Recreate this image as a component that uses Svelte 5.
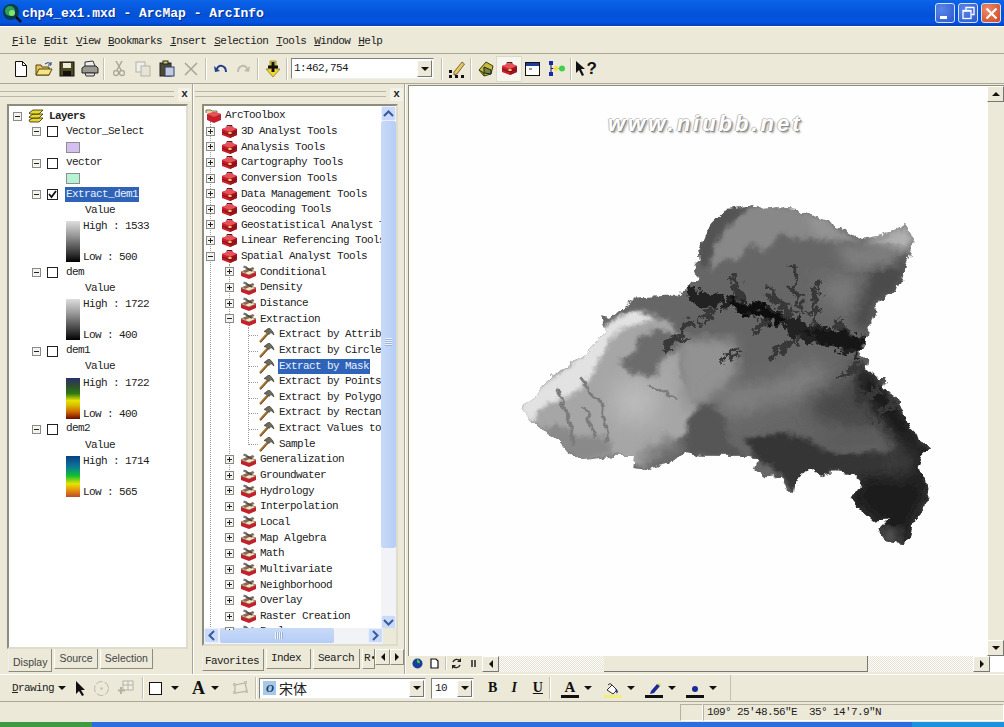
<script>
  const menus = ['File','Edit','View','Bookmarks','Insert','Selection','Tools','Window','Help'];
  const layers = [
    { name:'Vector_Select', swatch:'lilac' },
    { name:'vector', swatch:'mint' },
    { name:'Extract_dem1', checked:true, selected:true, high:'1533', low:'500', ramp:'gray-a' },
    { name:'dem', high:'1722', low:'400', ramp:'gray-b' },
    { name:'dem1', high:'1722', low:'400', ramp:'elev-a' },
    { name:'dem2', high:'1714', low:'565', ramp:'elev-b' }
  ];
  const tree = [
    ['3D Analyst Tools',1,'+'],['Analysis Tools',1,'+'],['Cartography Tools',1,'+'],['Conversion Tools',1,'+'],
    ['Data Management Tools',1,'+'],['Geocoding Tools',1,'+'],['Geostatistical Analyst Tools',1,'+'],
    ['Linear Referencing Tools',1,'+'],['Spatial Analyst Tools',1,'-'],
    ['Conditional',2,'+'],['Density',2,'+'],['Distance',2,'+'],['Extraction',2,'-'],
    ['Extract by Attributes',3],['Extract by Circle',3],['Extract by Mask',3,null,true],['Extract by Points',3],
    ['Extract by Polygon',3],['Extract by Rectangle',3],['Extract Values to Points',3],['Sample',3],
    ['Generalization',2,'+'],['Groundwater',2,'+'],['Hydrology',2,'+'],['Interpolation',2,'+'],['Local',2,'+'],
    ['Map Algebra',2,'+'],['Math',2,'+'],['Multivariate',2,'+'],['Neighborhood',2,'+'],['Overlay',2,'+'],
    ['Raster Creation',2,'+'],['Reclass',2,'+']
  ];
  const outline = "760,45 790,60 830,55 890,60 930,75 970,95 1020,115 1080,150 1140,140 1185,125 1215,105 1240,140 1235,180 1220,225 1195,300 1140,335 1120,380 1105,430 1100,460 1075,490 1105,510 1100,540 1130,570 1160,570 1150,600 1190,620 1210,670 1215,700 1240,725 1255,750 1290,775 1265,800 1255,840 1280,860 1285,900 1275,960 1240,1000 1230,1040 1205,1065 1150,1055 1135,1020 1165,990 1120,995 1080,960 1055,930 1085,880 1060,855 1000,850 960,860 925,835 890,870 885,905 865,905 840,860 800,865 765,840 775,810 740,800 660,800 600,800 560,790 510,820 430,840 400,835 405,800 340,800 300,810 250,815 205,795 170,755 130,720 90,700 60,655 110,620 130,590 180,545 230,510 270,480 320,430 300,385 330,390 375,350 420,325 500,320 540,320 570,280 595,270 580,235 600,210 595,180 615,130 640,100 680,60 720,55";
</script>

{#snippet exp(sign)}
  <svg class="exp" width="9" height="9" viewBox="0 0 9 9"><rect x=".5" y=".5" width="8" height="8" fill="#f4f3ee" stroke="#8a8a8a"/><path d="M2 4.5h5" stroke="#222"/>{#if sign==='+'}<path d="M4.5 2v5" stroke="#222"/>{/if}</svg>
{/snippet}
{#snippet boxClosed()}
  <svg width="17" height="15" viewBox="0 0 17 15"><path d="M1 5l8-3 7 3v6l-7 3-8-3z" fill="#c41f2b"/><path d="M1 5l8-3 7 3-7 3z" fill="#e8505a"/><path d="M9 8v6l7-3V5z" fill="#9c1420"/><path d="M6 3V1.500h5V3" fill="none" stroke="#5a1a1a"/><path d="M1 8l8 3 7-3" fill="none" stroke="#7a1018"/><rect x="7.500" y="8" width="3" height="2" fill="#f2d060"/></svg>
{/snippet}
{#snippet boxOpen()}
  <svg width="17" height="16" viewBox="0 0 17 16"><path d="M1 8l8 3 7-3v4l-7 3-8-3z" fill="#c41f2b"/><path d="M1 8l7-3 8 3-7 3z" fill="#f2e4cf" stroke="#7a4a2a" stroke-width=".7"/><path d="M3 7L13 3l1.500 2L5 9z" fill="#8a6a4a"/><path d="M5 3l7 4" stroke="#4a4a4a" stroke-width="2"/><path d="M4 1.500l3 1-1 2-3-1z" fill="#777"/></svg>
{/snippet}
{#snippet hammer()}
  <svg width="17" height="16" viewBox="0 0 17 16"><path d="M2 15L10 6" stroke="#a87c3a" stroke-width="2.600"/><path d="M2.500 15.500L10.500 6.500" stroke="#5a3a12" stroke-width=".8"/><path d="M6 4.500L10 1.500h2L15 5l1 3-3-2.500-2 2-2-2z" fill="#6d6a5e" stroke="#2e2e28" stroke-width=".6"/></svg>
{/snippet}
{#snippet drop()}<i class="drop"></i>{/snippet}
{#snippet comboBtn()}<span class="combo-btn"><i class="drop"></i></span>{/snippet}

<div class="app">
  <header class="title">
    <svg class="logo" width="20" height="20" viewBox="0 0 20 20"><circle cx="9" cy="9" r="8" fill="#0b3c4c"/><circle cx="8" cy="8" r="5" fill="#2aa05a"/><circle cx="10" cy="10" r="3" fill="#8ae070"/><path d="M14 14l5 5" stroke="#111" stroke-width="2.500"/></svg>
    <span class="title-text">chp4_ex1.mxd - ArcMap - ArcInfo</span>
    <div class="winbtns">
      <span class="wb"><svg width="19" height="19" viewBox="0 0 19 19"><rect x="4" y="12" width="7" height="3" fill="#fff"/></svg></span>
      <span class="wb"><svg width="19" height="19" viewBox="0 0 19 19"><path d="M7 6V3.500h8v7h-2.500" fill="none" stroke="#fff" stroke-width="1.300"/><rect x="4" y="6.500" width="8" height="8" fill="none" stroke="#fff" stroke-width="1.300"/><path d="M4 7h8" stroke="#fff" stroke-width="1.500"/></svg></span>
      <span class="wb close"><svg width="19" height="19" viewBox="0 0 19 19"><path d="M4.500 4.500l10 10M14.500 4.500l-10 10" stroke="#fff" stroke-width="2.200"/></svg></span>
    </div>
  </header>

  <nav class="menu">
    {#each menus as m}<span><u>{m[0]}</u>{m.slice(1)}</span>{/each}
  </nav>

  <div class="bar std">
    <span class="btn"><svg width="16" height="18" viewBox="0 0 16 18"><path d="M2.500 1.500h7l4 4v11h-11z" fill="#fff" stroke="#111"/><path d="M9.500 1.500v4h4" fill="none" stroke="#111"/></svg></span>
    <span class="btn"><svg width="18" height="16" viewBox="0 0 18 16"><path d="M1 14V4h5l1 2h7v8z" fill="#e6c65a" stroke="#55440f"/><path d="M1 14l3-6h13l-3 6z" fill="#f6e48a" stroke="#55440f"/><path d="M10 3q3-3 6 0M16 1v3h-3" fill="none" stroke="#1d3e7a"/></svg></span>
    <span class="btn"><svg width="16" height="16" viewBox="0 0 16 16"><rect x="1" y="1" width="14" height="14" fill="#4c4a1e" stroke="#111"/><rect x="4" y="2" width="8" height="5" fill="#ecebd8"/><rect x="4" y="10" width="8" height="5" fill="#111"/></svg></span>
    <span class="btn"><svg width="18" height="17" viewBox="0 0 18 17"><path d="M4 7V2l8-1 2 5" fill="#eee" stroke="#333"/><path d="M1 8l3-2h11l2 2v5H1z" fill="#9a9a92" stroke="#222"/><path d="M4 13h10l-1 3H5z" fill="#ddd" stroke="#333"/></svg></span>
    <i class="sep"></i>
    <span class="btn w24 off"><svg width="12" height="17" viewBox="0 0 12 17"><path d="M3 1l5 9M9 1L4 10" stroke="#a9a797" stroke-width="1.500"/><circle cx="3" cy="13" r="2.500" fill="none" stroke="#a9a797" stroke-width="1.300"/><circle cx="9" cy="13" r="2.500" fill="none" stroke="#a9a797" stroke-width="1.300"/></svg></span>
    <span class="btn w24 off"><svg width="16" height="16" viewBox="0 0 16 16"><rect x="1" y="1" width="9" height="10" fill="#eee" stroke="#b5b3a4"/><rect x="6" y="5" width="9" height="10" fill="#e6e4d6" stroke="#b5b3a4"/></svg></span>
    <span class="btn w24"><svg width="16" height="17" viewBox="0 0 16 17"><rect x="1" y="3" width="11" height="13" fill="#4c4a32" stroke="#222"/><rect x="4" y="1" width="5" height="3" fill="#d8c068" stroke="#222"/><rect x="6" y="7" width="9" height="9" fill="#c4c9dd" stroke="#2a3f75"/></svg></span>
    <span class="btn w24 off"><svg width="14" height="14" viewBox="0 0 14 14"><path d="M1 1l12 12M13 1L1 13" stroke="#a9a797" stroke-width="1.600"/></svg></span>
    <i class="sep"></i>
    <span class="btn"><svg width="15" height="11" viewBox="0 0 15 11"><path d="M3 8Q5 2 9 3q4 1 4 6" fill="none" stroke="#27408b" stroke-width="2"/><path d="M1 3l1 6 5-1z" fill="#27408b"/></svg></span>
    <span class="btn"><svg width="15" height="11" viewBox="0 0 15 11"><path d="M12 8Q10 2 6 3 2 4 2 9" fill="none" stroke="#bdbbad" stroke-width="2"/><path d="M14 3l-1 6-5-1z" fill="#bdbbad"/></svg></span>
    <i class="sep"></i>
    <span class="btn"><svg width="16" height="18" viewBox="0 0 16 18"><path d="M1 9l7 8 7-8h-4V1H5v8z" fill="#f2d830" stroke="#6a5a10" stroke-width=".6"/><path d="M6.500 2h3v3.500H13v3H9.500V12h-3V8.500H3v-3h3.500z" fill="#111"/></svg></span>
    <i class="sep"></i>
    <div class="combo scale"><span>1:462,754</span>{@render comboBtn()}</div>
    <i class="sep gapl"></i>
    <span class="btn"><svg width="18" height="18" viewBox="0 0 18 18"><path d="M6 12L14 2l2.500 2L9 14l-3 1z" fill="#e8c860" stroke="#4a3a10" stroke-width=".7"/><g fill="#111"><rect x="1" y="10" width="3" height="3"/><rect x="1" y="15" width="3" height="3"/><rect x="7" y="15" width="3" height="3"/><rect x="13" y="15" width="3" height="3"/></g></svg></span>
    <i class="sep"></i>
    <span class="btn"><svg width="18" height="17" viewBox="0 0 18 17"><path d="M2 10L9 2l7 4-2 8-7 2z" fill="#c8ba3c" stroke="#3a3a10"/><path d="M7 7l7 3v4l-7-1z" fill="#6d8a40" stroke="#222"/><path d="M2 10l5 3v3" fill="#8a7a20" stroke="#3a3a10"/></svg></span>
    <span class="btn w24 on">{@render boxClosed()}</span>
    <span class="btn"><svg width="15" height="14" viewBox="0 0 15 14"><rect x=".5" y=".5" width="14" height="13" fill="#fff" stroke="#111"/><rect x="1" y="1" width="13" height="3" fill="#1d3e9a"/><path d="M4 7h3" stroke="#333"/></svg></span>
    <span class="btn w24"><svg width="17" height="15" viewBox="0 0 17 15"><path d="M3 2v11M3 7.500h10" stroke="#1a1a60"/><rect x="1" y="0" width="4" height="4" fill="#1428b0"/><rect x="1" y="11" width="4" height="4" fill="#1428b0"/><path d="M5 7.500l3-3 3 3-3 3z" fill="#f0e040"/><circle cx="14" cy="7.500" r="3" fill="#40d050"/></svg></span>
    <i class="sep"></i>
    <span class="btn"><svg width="12" height="17" viewBox="0 0 12 17"><path d="M1 1l9 8H6l3 6-2 1-3-6-3 3z" fill="#111"/></svg><b class="q">?</b></span>
  </div>

  <main class="main">
    <aside class="panel toc">
      <div class="grip"><i class="lines"></i><b class="x">x</b></div>
      <div class="well">
        <div class="row root"><span class="r-exp">{@render exp('-')}</span>
          <svg class="stack" width="16" height="14" viewBox="0 0 16 14"><g fill="#e8d832" stroke="#2c2a08" stroke-width=".8"><path d="M1 11l4-2h10l-4 4H2z"/><path d="M1 8l4-3h10l-4 4H2z"/><path d="M1 4l4-3h10l-4 4H2z"/></g></svg>
          <b>Layers</b></div>
        {#each layers as l}
          <div class="row layer"><span class="c-exp">{@render exp('-')}</span>
            <span class="check">{#if l.checked}<svg width="9" height="9" viewBox="0 0 9 9"><path d="M1 4l2.500 3L8 1" fill="none" stroke="#111" stroke-width="1.800"/></svg>{/if}</span>
            <span class="lname" class:sel={l.selected}>{l.name}</span></div>
          {#if l.swatch}
            <div class="row swrow"><i class="swatch {l.swatch}"></i></div>
          {:else}
            <div class="row value">Value</div>
            <div class="legend"><i class="ramp {l.ramp}"></i>
              <div class="lab"><span>High : {l.high}</span><span>Low : {l.low}</span></div></div>
          {/if}
        {/each}
      </div>
      <div class="tabs"><span class="tab active">Display</span><span class="tab">Source</span><span class="tab">Selection</span></div>
    </aside>

    <aside class="panel tbx">
      <div class="grip"><i class="lines"></i><b class="x">x</b></div>
      <div class="well tree-well">
        <div class="tree">
          <i class="guide g1"></i><i class="guide g2"></i><i class="guide g3"></i>
          <div class="row node"><svg class="rooticon" width="18" height="15" viewBox="0 0 18 15"><path d="M1 5V2h5l1 1h5v3" fill="#e8d48a" stroke="#776"/><path d="M2 6l7-2 7 2v6l-7 3-7-3z" fill="#c41f2b"/><path d="M2 6l7-2 7 2-7 3z" fill="#e8505a"/></svg><span>ArcToolbox</span></div>
          {#each tree as [name, lvl, sign, sel]}
            <div class="row node l{lvl}">
              {#if sign}<span class="n-exp">{@render exp(sign)}</span>{/if}
              <span class="n-ico">
                {#if lvl===1}{@render boxClosed()}{:else if lvl===2}{@render boxOpen()}{:else}<i class="stub"></i>{@render hammer()}{/if}
              </span>
              <span class="n-text" class:sel={sel}>{name}</span>
            </div>
          {/each}
        </div>
        <div class="vs">
          <span class="sb"><svg width="11" height="7" viewBox="0 0 11 7"><path d="M1 6l4.500-4.500L10 6" fill="none" stroke="#3a5a9a" stroke-width="2"/></svg></span>
          <div class="vthumb"><i class="knurl"></i></div>
          <div class="vrest"></div>
          <span class="sb"><svg width="11" height="7" viewBox="0 0 11 7"><path d="M1 1l4.500 4.500L10 1" fill="none" stroke="#3a5a9a" stroke-width="2"/></svg></span>
        </div>
        <div class="hs">
          <span class="sb"><svg width="7" height="11" viewBox="0 0 7 11"><path d="M6 1L1.500 5.500 6 10" fill="none" stroke="#3a5a9a" stroke-width="2"/></svg></span>
          <div class="hthumb"><i class="knurl h"></i></div>
          <div class="hrest"></div>
          <span class="sb"><svg width="7" height="11" viewBox="0 0 7 11"><path d="M1 1l4.500 4.500L1 10" fill="none" stroke="#3a5a9a" stroke-width="2"/></svg></span>
          <i class="corner"></i>
        </div>
      </div>
      <div class="tabs ttabs"><span class="tab active">Favorites</span><span class="tab ix">Index</span><span class="tab">Search</span><span class="tab cut">R&#8226;</span>
        <span class="tarrow"><i class="tri-l"></i></span><span class="tarrow"><i class="tri-r"></i></span></div>
    </aside>

    <section class="map">
      <div class="mapview">
        <div class="canvas">
          <svg class="terrain" width="450" height="360" viewBox="0 0 1350 1080">
            <defs>
              <clipPath id="shape"><polygon points={outline}/></clipPath>
              <filter id="jag" x="-5%" y="-5%" width="110%" height="110%"><feTurbulence type="fractalNoise" baseFrequency=".035" numOctaves="3" seed="4"/><feDisplacementMap in="SourceGraphic" scale="26" xChannelSelector="R" yChannelSelector="G"/></filter>
              <filter id="jag2" x="-5%" y="-5%" width="110%" height="110%"><feTurbulence type="fractalNoise" baseFrequency=".045" numOctaves="4" seed="11"/><feDisplacementMap in="SourceGraphic" scale="55" xChannelSelector="G" yChannelSelector="R"/></filter>
              <filter id="b6"><feGaussianBlur stdDeviation="6"/></filter>
              <filter id="b16"><feGaussianBlur stdDeviation="16"/></filter>
              <filter id="b30" x="-40%" y="-40%" width="180%" height="180%"><feGaussianBlur stdDeviation="30"/></filter>
            </defs>
            <g filter="url(#jag)"><g clip-path="url(#shape)">
              <rect width="1350" height="1080" fill="#666"/>
              <!-- north slope -->
              <polygon filter="url(#b6)" fill="#888" points="625,250 650,150 700,100 760,50 890,55 960,95 1080,160 1000,155 900,150 840,130 800,190 750,160 720,210 670,210"/>
              <polygon filter="url(#b16)" fill="#b4b4b4" points="1080,150 1185,125 1215,95 1250,140 1220,190 1130,170"/>
              <polygon filter="url(#b16)" fill="#9a9a9a" points="920,70 1000,110 1080,155 990,140 930,110"/>
              <polygon filter="url(#b6)" fill="#535353" points="590,210 610,120 680,55 740,50 680,110 640,170 625,245"/>
              <polygon filter="url(#b30)" fill="#808080" points="960,270 1060,270 1070,340 990,350"/>
              <polygon filter="url(#b16)" fill="#4c4c4c" points="1120,230 1230,215 1195,310 1130,340 1105,440 1060,400 1080,340"/>
              <polygon filter="url(#b16)" fill="#7e7e7e" points="1000,170 1200,170 1170,230 1050,240"/>
              <!-- west light slope -->
              <polygon filter="url(#b6)" fill="#a6a6a6" points="60,655 130,590 180,545 270,480 320,430 340,400 440,370 510,400 540,450 545,560 590,660 550,740 430,835 350,795 250,815 170,750 90,700"/>
              <polygon filter="url(#b16)" fill="#929292" points="530,450 700,450 715,540 680,590 610,650 550,660"/>
              <polygon filter="url(#b30)" fill="#848484" points="670,600 770,590 860,565 950,520 1000,590 920,620 800,640 720,680 640,650"/>
              <polygon filter="url(#b30)" fill="#bababa" points="340,580 470,580 460,700 350,700"/>
              <polygon filter="url(#b6)" fill="#e2e2e2" points="50,655 130,590 230,510 300,420 340,395 400,360 460,390 345,430 300,510 270,570 215,620 130,650 90,705"/>
              <polygon filter="url(#b6)" fill="#6c6c6c" points="350,520 400,500 420,440 480,420 530,440 545,470 480,520 470,560 400,555 385,540"/>
              <polygon filter="url(#b6)" fill="#8a8a8a" points="130,720 175,700 230,740 320,740 340,790 250,815 190,790"/>
              <g fill="none" stroke="#7c7c7c" stroke-width="8">
                <polyline points="170,600 205,690 225,770"/><polyline points="240,570 305,650 325,760"/><polyline points="250,650 285,745"/><polyline points="450,590 535,630"/>
              </g>
              <polygon filter="url(#b6)" fill="#565656" points="575,670 630,645 670,680 685,760 745,805 560,795 565,700"/>
              <polygon filter="url(#b16)" fill="#7a7a7a" points="420,800 510,740 540,780 430,840"/>
              <!-- south east -->
              <polygon filter="url(#b30)" fill="#484848" points="920,620 1010,590 1075,560 1140,680 1190,760 1040,720 950,700"/>
              <polygon filter="url(#b6)" fill="#353535" points="735,750 850,730 920,750 1000,790 1180,790 1290,775 1285,1070 1060,1070 1050,930 1085,880 1000,850 890,905 840,860 770,810"/>
              <polygon filter="url(#b16)" fill="#5c5c5c" points="920,740 1030,730 1170,710 1180,760 1010,790"/>
              <polygon filter="url(#b16)" fill="#1c1c1c" points="1070,510 1160,590 1290,780 1280,900 1240,1000 1205,1070 1140,1000 1055,940 1085,870 1180,860 1190,760 1130,680 1070,610"/>
              <polygon filter="url(#b30)" fill="#4a4a4a" points="1170,770 1240,790 1240,860 1170,850"/>
              <polygon filter="url(#b16)" fill="#5a5a5a" points="1140,1015 1190,1015 1205,1060 1150,1060"/>
              <polygon filter="url(#b16)" fill="#686868" points="770,830 815,825 810,865 770,860"/>
              <!-- river network -->
              <g filter="url(#jag2)">
                <g fill="none" stroke="#383838" stroke-width="20" stroke-linecap="round">
                  <polyline points="700,270 715,310 730,345"/><polyline points="800,295 830,330 870,380"/><polyline points="880,235 885,300 905,360"/><polyline points="950,285 940,340 945,400"/><polyline points="610,400 630,375 655,350"/>
                  <polyline points="820,505 860,470 905,445"/><polyline points="500,470 545,440 570,395"/><polyline points="670,510 710,480"/><polyline points="1030,560 1080,530"/><polyline points="1090,630 1130,600"/><polyline points="1130,690 1180,650"/><polyline points="770,420 800,395"/><polyline points="1020,400 1040,440"/>
                </g>
                <polygon fill="#222" points="560,285 605,310 680,325 760,340 860,375 925,405 1000,420 1100,440 1075,510 1000,475 900,455 850,410 780,390 700,365 620,355 560,340"/>
                <polygon fill="#0f0f0f" points="690,335 780,350 850,385 850,405 780,385 700,362"/>
                <polygon fill="#151515" points="900,430 1000,430 1090,450 1075,490 1000,470"/>
              </g>
            </g></g>
          </svg>
          <span class="mark">www.niubb.net</span>
        </div>
        <div class="mvs">
          <span class="xb"><i class="tri-u"></i></span>
          <div class="mv-track"></div>
          <span class="xb"><i class="tri-d"></i></span>
        </div>
      </div>
      <div class="mapfoot">
        <span class="mf"><svg width="11" height="11" viewBox="0 0 11 11"><circle cx="5.500" cy="5.500" r="5" fill="#1a3f9a"/><path d="M5 1q3 1 3 4-2 1-3-1z" fill="#50c050"/></svg></span>
        <span class="mf"><svg width="9" height="11" viewBox="0 0 9 11"><path d="M1 1h5l2 2v7H1z" fill="#fff" stroke="#111" stroke-width="1.200"/></svg></span>
        <i class="sep"></i>
        <span class="mf"><svg width="11" height="11" viewBox="0 0 11 11"><path d="M2 4a4 4 0 0 1 7-1M9 7a4 4 0 0 1-7 1" fill="none" stroke="#222" stroke-width="1.400"/><path d="M10 0v4H6zM1 11V7h4z" fill="#222"/></svg></span>
        <span class="mf"><i class="pause"></i></span>
        <span class="xb left"><i class="tri-l"></i></span>
        <div class="dither a"></div>
        <div class="mhthumb"></div>
        <div class="dither b"></div>
        <span class="xb"><i class="tri-r"></i></span>
        <i class="whitecorner"></i>
      </div>
    </section>
  </main>

  <div class="bar draw">
    <span class="dlabel"><u>D</u>rawing</span>{@render drop()}
    <span class="b18 m1"><svg width="11" height="16" viewBox="0 0 11 16"><path d="M1 1l9 9H6l3 5-2 1-3-5-3 3z" fill="#111"/></svg></span>
    <span class="b18"><svg width="17" height="17" viewBox="0 0 17 17"><circle cx="8.500" cy="8.500" r="7" fill="none" stroke="#b9b7a8" stroke-dasharray="7 2"/><rect x="7.500" y="7.500" width="2" height="2" fill="#b9b7a8"/></svg></span>
    <span class="b18 m2"><svg width="17" height="16" viewBox="0 0 17 16"><rect x="6" y="1" width="10" height="9" fill="#efeee2" stroke="#b5b3a4"/><path d="M11 1v9M6 5h10" stroke="#b5b3a4"/><path d="M4 7v7M1 10.500h7" stroke="#b5b3a4" stroke-width="2"/></svg></span>
    <i class="sep"></i>
    <span class="sq"></span>{@render drop()}
    <b class="bigA">A</b>{@render drop()}
    <span class="b18 m3"><svg width="17" height="14" viewBox="0 0 17 14"><path d="M3 4l10-2 2 8-12 2z" fill="none" stroke="#b5b3a4" stroke-width="1.200"/><g fill="#c5c3b4"><rect x="1" y="2" width="3" height="3"/><rect x="12" y="0" width="3" height="3"/><rect x="13" y="9" width="3" height="3"/><rect x="1" y="10" width="3" height="3"/></g></svg></span>
    <i class="sep"></i>
    <div class="combo font"><svg width="13" height="14" viewBox="0 0 13 14"><rect width="13" height="14" fill="#a8c8e8"/><text x="3" y="11" font-size="11" font-style="italic" font-weight="700" font-family="Liberation Serif" fill="#0c3c6c">O</text></svg><span class="cjk">宋体</span>{@render comboBtn()}</div>
    <div class="combo size"><span>10</span>{@render comboBtn()}</div>
    <b class="fmt bb">B</b><b class="fmt ii">I</b><b class="fmt uu">U</b>
    <i class="sep"></i>
    <span class="und blk first"><b class="uA">A</b></span>{@render drop()}
    <span class="und yel"><svg width="15" height="12" viewBox="0 0 15 12"><path d="M2 7l5-5 5 5-4 4z" fill="#fff" stroke="#333"/><path d="M3 2q2-3 4 0" fill="none" stroke="#333"/><path d="M10 6l3 2-1 3z" fill="#1a2a8a"/></svg></span>{@render drop()}
    <span class="und blk"><svg width="14" height="12" viewBox="0 0 14 12"><path d="M3 11l1-3 6-7 3 2-6 7z" fill="#1a2a9a"/><path d="M10 1l2-1 2 2-1 1z" fill="#e8d840"/></svg></span>{@render drop()}
    <span class="und blk"><i class="dot"></i></span>{@render drop()}
    <i class="endline"></i>
  </div>

  <footer class="status">
    <span class="cell small"></span>
    <span class="cell coords">109° 25′48.56″E&nbsp;&nbsp;35° 14′7.9″N</span>
  </footer>
  <div class="taskbar"><i></i><b></b><em></em></div>
</div>

<style>
  :global(body){margin:0;background:#ece9d8}
  .app{width:1004px;height:727px;overflow:hidden;background:#ece9d8;display:flex;flex-direction:column;font:11px/1 "Liberation Mono",monospace;letter-spacing:-.6px;color:#222}
  svg{display:block;flex:none}
  u{text-decoration:underline}

  .title{height:26px;flex:none;display:flex;align-items:center;background:linear-gradient(#0a66ea 0,#0a5fe4 12%,#0352d8 55%,#0454e0 85%,#0340b8 100%);color:#fff;padding-left:2px;box-sizing:border-box}
  .title-text{font:700 13px/1 "Liberation Mono",monospace;letter-spacing:0;text-shadow:1px 1px 0 #0a2f90}
  .winbtns{margin-left:auto;display:flex;gap:3px;padding-right:3px}
  .wb{width:20px;height:20px;border-radius:3px;border:1px solid #d4e0f8;box-sizing:border-box;background:radial-gradient(circle at 30% 30%,#5a86e8,#2a58d0);display:flex;align-items:center;justify-content:center}
  .wb.close{background:radial-gradient(circle at 30% 30%,#ec8a6a,#d0451e)}

  .menu{height:28px;flex:none;box-sizing:border-box;display:flex;align-items:center;gap:8px;padding:2px 0 0 12px;border-bottom:1px solid #aca899;border-top:1px solid #fff}
  .bar{flex:none;display:flex;align-items:center;box-sizing:border-box;border-bottom:1px solid #aca899}
  .std{height:30px;padding-left:9px}
  .btn{width:23px;height:24px;display:flex;align-items:center;justify-content:center;position:relative;flex:none}
  .btn.w24{width:24px}
  .btn.on{background:#f6f5ee;outline:1px solid #dcdacb}
  .q{font:700 17px/1 "Liberation Sans",sans-serif;color:#111}
  .sep{width:1px;height:22px;background:#c4c1b0;box-shadow:1px 0 0 #fff;margin:0 3px 0 2px;flex:none}
  .sep.gapl{margin-left:8px}
  .combo{background:#fff;border:1px solid;border-color:#808080 #eee #eee #808080;box-sizing:border-box;height:21px;display:flex;align-items:center;position:relative;flex:none}
  .combo-btn{margin-left:auto;width:15px;height:17px;background:#ece9d8;border:1px solid;border-color:#fff #777 #777 #fff;box-sizing:border-box;display:flex;align-items:center;justify-content:center;margin-right:1px}
  .drop{width:0;height:0;border:4px solid transparent;border-top:4px solid #111;border-bottom:0;display:inline-block;flex:none}
  .scale{width:143px;padding-left:2px;margin-left:1px}
  .scale+.sep{margin-left:7px}

  .main{height:590px;flex:none;display:flex}
  .panel{display:flex;flex-direction:column;box-sizing:border-box;flex:none;border-right:1px solid #a9a697;box-shadow:1px 0 0 #fff}
  .toc{width:193px;padding-left:7px;margin-right:4px}
  .tbx{width:208px;padding-left:5px;margin-right:3px}
  .grip{height:20px;flex:none;display:flex;align-items:center;position:relative}
  .lines{flex:1;height:4px;border-top:1px solid #bab7a6;border-bottom:1px solid #bab7a6;margin-left:-7px;margin-right:4px}
  .x{width:13px;height:13px;font:700 11px/12px "Liberation Mono",monospace;text-align:center;margin-right:1px;background:#f4f2e8;letter-spacing:0}
  .well{position:relative;width:181px;height:545px;box-sizing:border-box;background:#fff;border:2px solid;border-color:#8e8c7d #dedccd #dedccd #8e8c7d;padding-top:2.500px;flex:none}
  .row{height:15.65px;display:flex;align-items:center;white-space:nowrap;position:relative}
  .r-exp{margin-left:4px;margin-right:6px}
  .stack{margin-right:5px}
  .c-exp{margin-left:23px}
  .check{width:11px;height:11px;border:1px solid #222;box-sizing:border-box;margin-left:6px;display:flex;align-items:center;justify-content:center;background:#fff;flex:none}
  .lname{margin-left:8px;padding:1px 0 2px}
  .sel{background:#2f63b8;color:#e8f0ff;padding:2px 1px;margin-left:-1px}
  .lname.sel{margin-left:7px}
  .swrow{padding-left:57px}
  .swatch{width:14px;height:11px;border:1px solid #8e8e8e;box-sizing:border-box}
  .lilac{background:#d3bff0}.mint{background:#b8f2d6}
  .value{padding-left:76px}
  .legend{height:47px;display:flex;padding-left:57px;box-sizing:border-box;padding-bottom:1px}
  .ramp{width:14px;height:41px;margin-top:3px;flex:none}
  .gray-a,.gray-b{background:linear-gradient(#dedede,#999 35%,#333 80%,#000)}
  .elev-a{background:linear-gradient(#2c2e6e 0,#2d4f2e 20%,#2e7a14 38%,#e6e400 55%,#d8c000 66%,#d46a00 82%,#6a0a00)}
  .elev-b{background:linear-gradient(#0b3f86 0,#0b7c96 28%,#10c030 48%,#e6e400 68%,#e68a10 85%,#b84a2a)}
  .lab{display:flex;flex-direction:column;justify-content:space-between;margin-left:3px;height:47px;padding:3px 0 2px;box-sizing:border-box}
  .tabs{display:flex;align-items:flex-start;gap:2px;height:25px;flex:none;font:10.500px/1 "Liberation Sans",sans-serif;letter-spacing:0;color:#444;margin-left:1px}
  .tab{padding:4px 4px 4px;border:1px solid;border-color:#fff #8e8c7d #8e8c7d #fff;border-top:0;white-space:nowrap}
  .tab.active{padding:8px 4px 3px;border-left-color:#eee;background:#ece9d8}
  .tree-well{width:196px;height:542px;padding:0;overflow:hidden}
  .ttabs{font:11px/1 "Liberation Mono",monospace;letter-spacing:-.6px;color:#222;margin-top:3px;margin-left:0;gap:2px;position:relative}
  .ttabs .tab{padding:4px 5px 4px 4px}
  .ttabs .tab.ix{padding-right:9px}
  .ttabs .tab.active{padding:7px 4px 3px 2px}
  .ttabs .cut{padding:4px 1px;width:10px;overflow:hidden}
  .tarrow{width:15px;height:16px;box-sizing:border-box;border:1px solid;border-color:#fff #8e8c7d #8e8c7d #fff;display:flex;align-items:center;justify-content:center;margin-left:-2px;position:relative}

  .tree{height:524px;width:179px;overflow:hidden;position:relative;padding-top:2px;box-sizing:border-box}
  .guide{position:absolute;border-left:1px dotted #999;width:0}
  .g1{left:6px;top:15px;height:510px}
  .g2{left:25px;top:158px;height:210px}
  .g3{left:44px;top:221px;height:118px}
  .rooticon{margin-left:1px;margin-right:2px}
  .n-exp{position:absolute;top:3px}
  .l1 .n-exp{left:2px}
  .l2 .n-exp{left:21px}
  .n-ico{position:absolute;display:flex;align-items:center;top:0;height:15.65px}
  .l1 .n-ico{left:17px}
  .l2 .n-ico{left:36px}
  .l3 .n-ico{left:54px}
  .l1 .n-text{margin-left:37px}
  .l2 .n-text{margin-left:56px}
  .l3 .n-text{margin-left:75px}
  .exp{position:relative;z-index:1}
  .stub{position:absolute;left:-9px;top:8px;width:9px;border-top:1px dotted #999}
  .n-text.sel{padding:2px 1px;margin-left:74px}

  .vs{position:absolute;right:0;top:0;width:15px;height:524px;display:flex;flex-direction:column}
  .sb{width:15px;height:15px;flex:none;background:#c9dafa;border:1px solid #eaf0fd;border-radius:2px;box-sizing:border-box;display:flex;align-items:center;justify-content:center}
  .vthumb{height:427px;background:linear-gradient(90deg,#c8daf8,#b6cdf6);border-radius:2px;position:relative;flex:none}
  .knurl{position:absolute;left:4px;top:217px;width:7px;height:8px;background:repeating-linear-gradient(#eef3fd 0 1px,#9ab2dc 1px 2px)}
  .knurl.h{left:48%;top:4px;width:8px;height:7px;background:repeating-linear-gradient(90deg,#eef3fd 0 1px,#9ab2dc 1px 2px)}
  .vrest{flex:1;background:#f1f3f7}
  .hs{position:absolute;left:0;bottom:0;width:179px;height:16px;display:flex;background:#f1f3f7}
  .hthumb{width:114px;height:15px;background:linear-gradient(#c8daf8,#b6cdf6);position:relative;margin-left:1px;flex:none;border-radius:2px}
  .hrest{flex:1}
  .corner{position:absolute;left:179px;top:0;width:15px;height:16px;background:#ece9d8}

  .map{flex:none;width:596px;display:flex;flex-direction:column;padding-top:1px;box-sizing:border-box}
  .mapview{height:571px;display:flex;border-top:1px solid #8e8c7d;border-left:1px solid #8e8c7d;box-sizing:border-box;flex:none}
  .canvas{flex:1;position:relative;background:#fefefe;overflow:hidden}
  .terrain{position:absolute;left:91px;top:103px}
  .mark{position:absolute;left:199px;top:27px;font:italic 700 22px/1 "Liberation Sans",sans-serif;letter-spacing:3px;color:#fff;text-shadow:1px 1px 0 #8d8d8d,-1px 0 0 #bbb,0 -1px 0 #c8c8c8,2px 2px 2px #aaa}
  .mvs{width:17px;flex:none;display:flex;flex-direction:column;background:#ece9d8}
  .mv-track{flex:1;border-left:1px solid #fff}
  .xb{width:17px;height:16px;flex:none;background:#ece9d8;border:1px solid;border-color:#fff #777 #777 #fff;box-sizing:border-box;display:flex;align-items:center;justify-content:center}
  .tri-u,.tri-d,.tri-l,.tri-r{width:0;height:0;border:4px solid transparent;display:block}
  .tri-u{border-bottom-color:#111;border-top:0}
  .tri-d{border-top-color:#111;border-bottom:0}
  .tri-l{border-right-color:#111;border-left:0}
  .tri-r{border-left-color:#111;border-right:0}
  .mapfoot{height:17px;display:flex;align-items:center;padding-left:1px;flex:none;margin-top:-1px}
  .mf{width:17px;display:flex;justify-content:center;flex:none}
  .mapfoot .sep{height:13px;margin:0 2px 0 2px}
  .pause{width:5px;height:7px;border-left:2px solid #555;border-right:2px solid #555;box-sizing:border-box}
  .dither{height:16px;flex:none;background:repeating-conic-gradient(#fff 0 25%,#e4e1d0 0 50%) 0 0/2px 2px}
  .dither.a{width:105px}
  .dither.b{width:105px}
  .mhthumb{width:264px;height:16px;flex:none;background:#ece9d8;border-right:1px solid #777;border-bottom:1px solid #777;box-sizing:border-box}
  .whitecorner{width:17px;height:16px;background:#fff;flex:none}

  .draw{height:28px;position:relative;padding-left:12px;border-top:1px solid #fff}
  .dlabel{margin-right:4px}
  .b18{width:22px;display:flex;justify-content:center;flex:none}
  .m1{margin:0 -1px 0 3px}.m2{margin:0 4px 0 2px}.m3{margin:0 2px 0 10px}
  .sq{width:13px;height:13px;border:1px solid #111;background:#fff;margin:0 9px 0 3px;box-sizing:border-box;flex:none}
  .bigA{font:700 18px/1 "Liberation Serif",serif;margin-left:13px;margin-right:6px;letter-spacing:0;color:#111}
  .font{width:167px;padding-left:3px}
  .cjk{font:14px/1 "Noto Sans CJK SC",sans-serif;letter-spacing:0;margin-left:3px}
  .size{width:43px;margin-left:5px;padding-left:3px}
  .fmt{font:700 14px/1 "Liberation Serif",serif;letter-spacing:0;color:#111}
  .bb{margin-left:14px}.ii{margin-left:14px;font-style:italic}.uu{margin-left:16px;text-decoration:underline;margin-right:4px}
  .und{width:18px;height:20px;display:flex;flex-direction:column;align-items:center;justify-content:flex-end;box-sizing:border-box;flex:none;margin:0 5px 0 10px}
  .und.first{margin-left:8px}
  .blk{border-bottom:3px solid #111}
  .yel{border-bottom:3px solid #f0f07a;margin-left:12px}
  .uA{font:700 15px/1 "Liberation Serif",serif;letter-spacing:0;color:#111}
  .dot{width:6px;height:6px;background:#1a2a9a;border-radius:50%;margin-bottom:3px}
  .endline{position:absolute;left:730px;top:0;height:27px;border-left:1px solid #c4c1b0}

  .status{height:20px;flex:none;display:flex;padding-left:680px;box-sizing:border-box;padding-top:2px}
  .cell{height:17px;border:1px solid;border-color:#b4b1a1 #fff #fff #b4b1a1;box-sizing:border-box;display:flex;align-items:center}
  .small{width:23px}
  .coords{flex:1;padding-left:3px}
  .taskbar{flex:1;display:flex;min-height:0}
  .taskbar i{width:92px;background:#3d9a45}
  .taskbar b{flex:1;background:#2a6fe0}
  .taskbar em{width:92px;background:#1a92e0}
</style>
